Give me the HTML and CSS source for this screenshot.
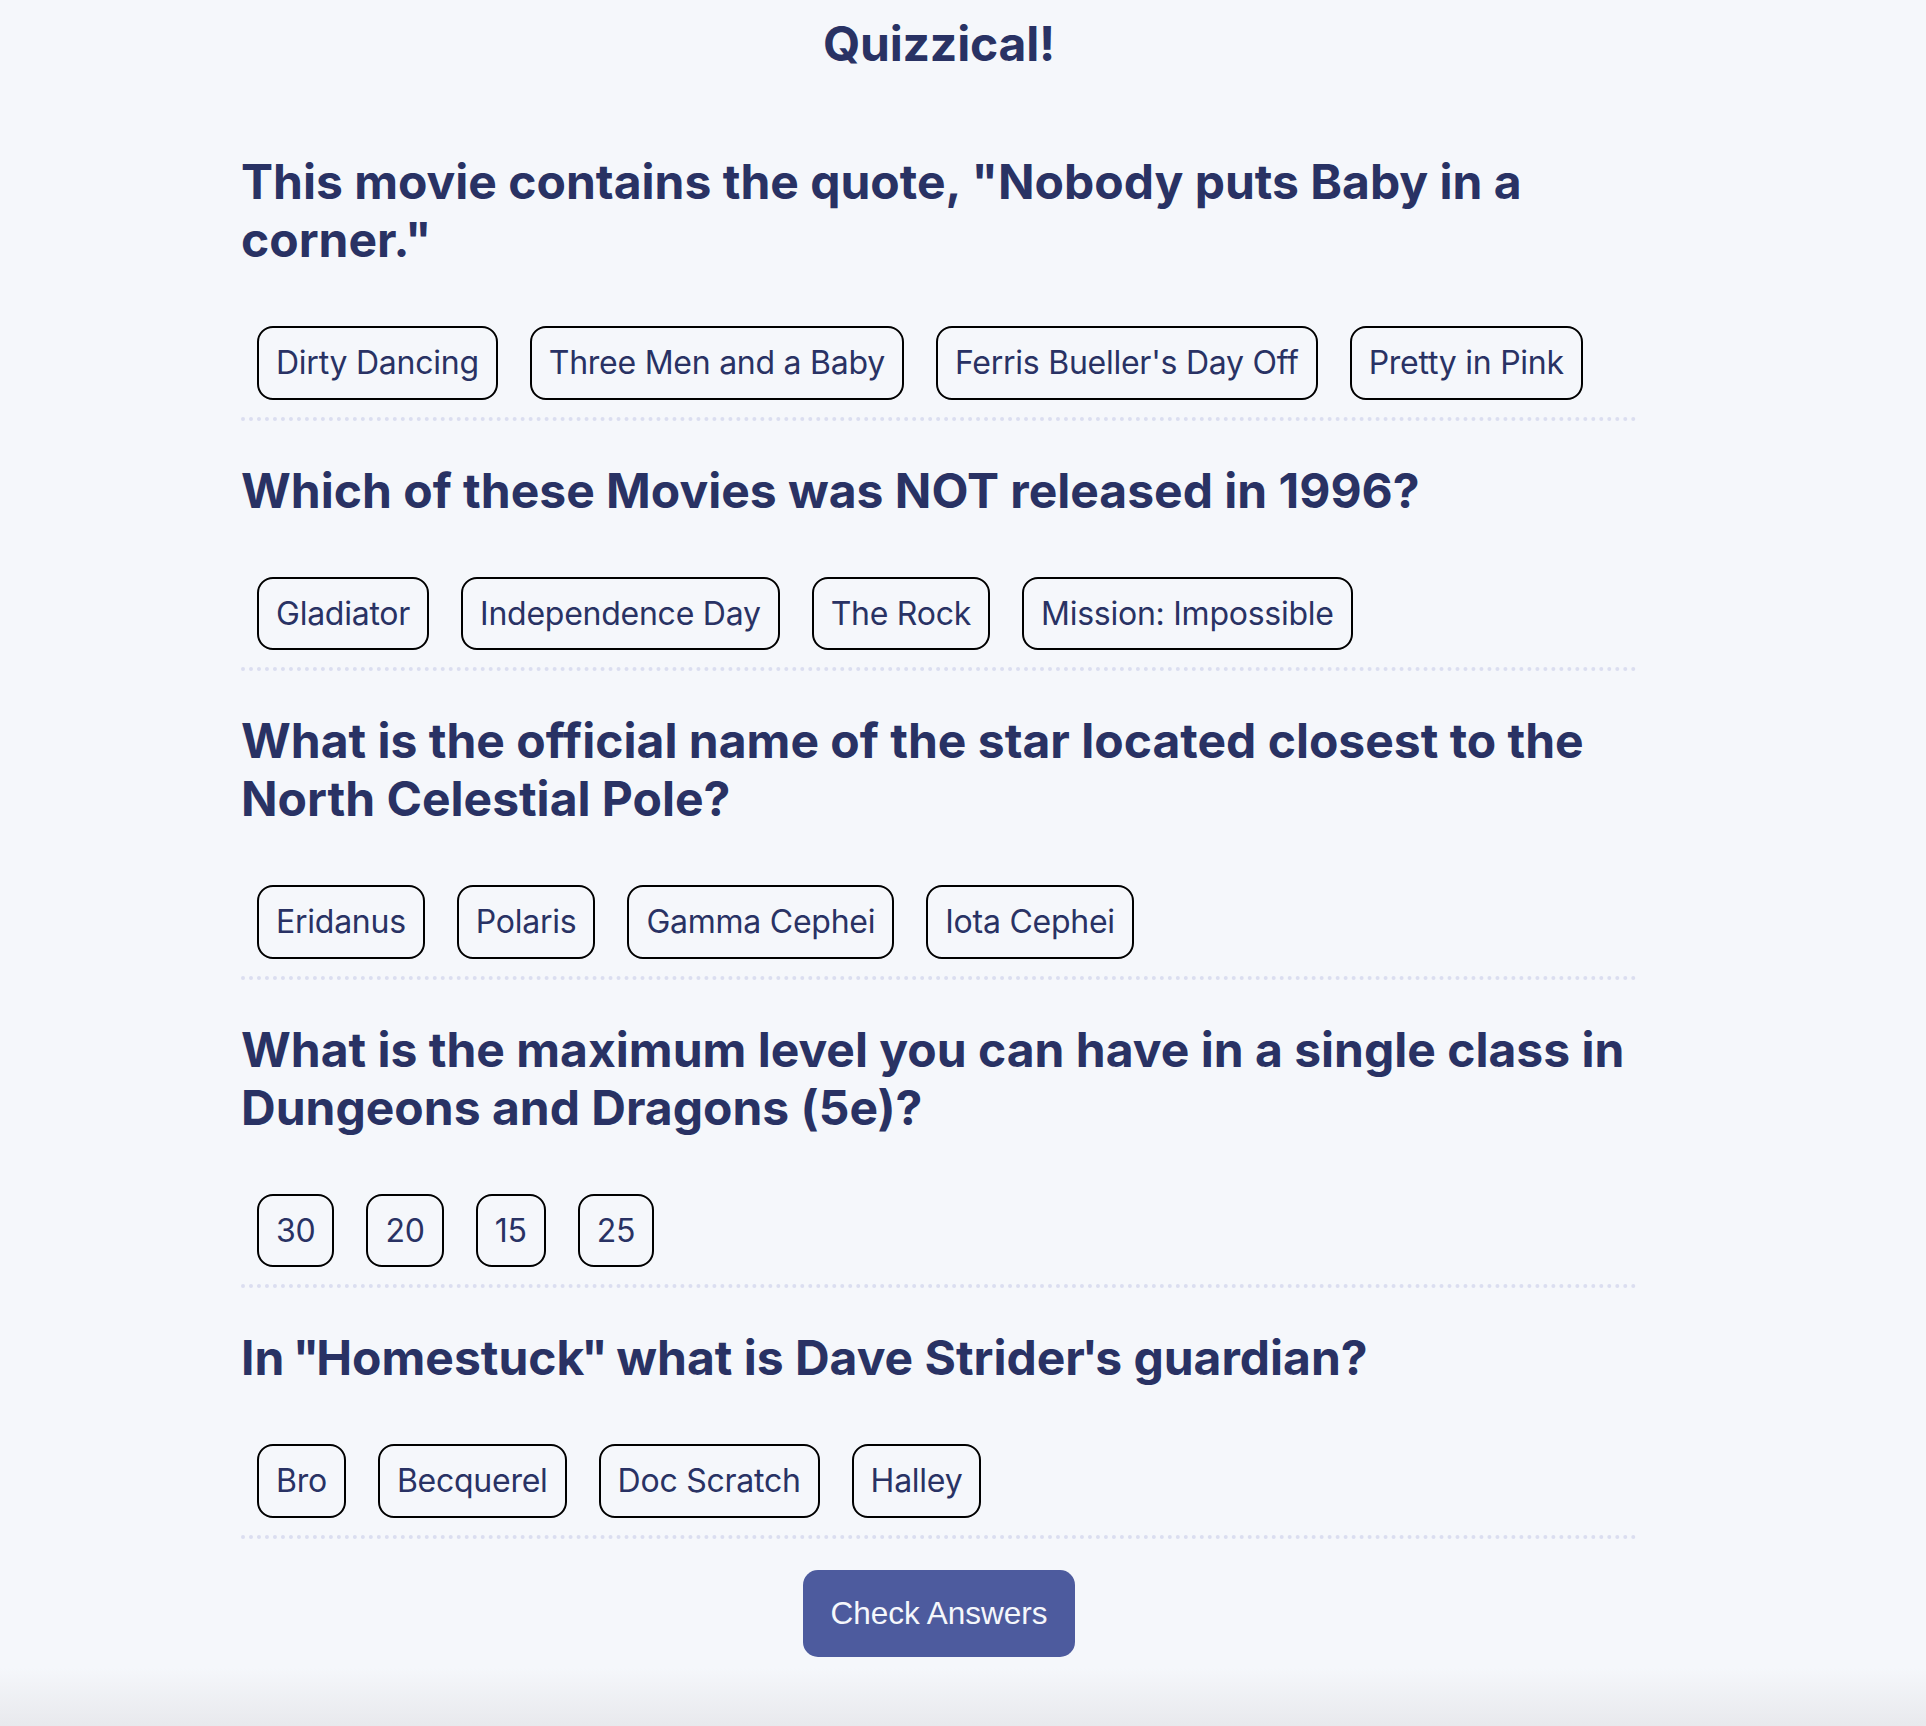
FILE: index.html
```html
<!DOCTYPE html>
<html lang="en">
<head>
<meta charset="utf-8">
<title>Quizzical!</title>
<link rel="stylesheet" href="styles.css">
</head>
<body>
<main class="quiz">
  <h1 class="quiz-title">Quizzical!</h1>

  <section class="question">
    <h2 class="question-text">This movie contains the quote, "Nobody puts Baby in a corner."</h2>
    <ul class="answers">
      <li class="answer">Dirty Dancing</li>
      <li class="answer">Three Men and a Baby</li>
      <li class="answer">Ferris Bueller's Day Off</li>
      <li class="answer">Pretty in Pink</li>
    </ul>
  </section>

  <section class="question">
    <h2 class="question-text">Which of these Movies was NOT released in 1996?</h2>
    <ul class="answers">
      <li class="answer">Gladiator</li>
      <li class="answer">Independence Day</li>
      <li class="answer">The Rock</li>
      <li class="answer">Mission: Impossible</li>
    </ul>
  </section>

  <section class="question">
    <h2 class="question-text">What is the official name of the star located closest to the North Celestial Pole?</h2>
    <ul class="answers">
      <li class="answer">Eridanus</li>
      <li class="answer">Polaris</li>
      <li class="answer">Gamma Cephei</li>
      <li class="answer">Iota Cephei</li>
    </ul>
  </section>

  <section class="question">
    <h2 class="question-text">What is the maximum level you can have in a single class in Dungeons and Dragons (5e)?</h2>
    <ul class="answers">
      <li class="answer">30</li>
      <li class="answer">20</li>
      <li class="answer">15</li>
      <li class="answer">25</li>
    </ul>
  </section>

  <section class="question">
    <h2 class="question-text">In <span class="qm">"</span>Homestuck<span class="qm">"</span> what is Dave Strider<span class="qm">'</span>s guardian?</h2>
    <ul class="answers">
      <li class="answer">Bro</li>
      <li class="answer">Becquerel</li>
      <li class="answer">Doc Scratch</li>
      <li class="answer">Halley</li>
    </ul>
  </section>

  <div class="actions">
    <button class="check-btn" type="button">Check Answers</button>
  </div>
</main>
</body>
</html>
```

FILE: styles.css
```css
html {
  min-height: 100%;
  background: linear-gradient(to bottom, #F5F7FB 0, #F5F7FB 1668px, #E8E9ED 1726px);
  background-repeat: no-repeat;
}

body {
  margin: 0;
  font-family: Inter, "Noto Sans", sans-serif;
  color: #293264;
}

.quiz {
  width: 1396px;
  margin-left: 241px;
  padding-top: 15px;
}

.quiz-title {
  margin: 0 0 39px;
  font-size: 48px;
  line-height: 58px;
  font-weight: 700;
  letter-spacing: -0.2px;
  text-align: center;
}

.question {
  padding: 41px 0 17px;
  border-bottom: 4px dotted #DBDEF0;
}

.question-text {
  margin: 0;
  font-size: 48px;
  line-height: 58px;
  font-weight: 700;
}

.qm {
  margin: 0 -3px;
}

.answers {
  list-style: none;
  margin: 57px 0 0;
  padding: 0;
  display: flex;
  flex-wrap: wrap;
}

.answer {
  margin: 0 16px;
  padding: 15px 17px;
  border: 2px solid #000;
  border-radius: 16px;
  font-size: 32px;
  line-height: 39.5px;
  font-weight: 400;
  letter-spacing: -0.25px;
  color: #293264;
}

.actions {
  display: flex;
  justify-content: center;
  padding-top: 31px;
}

.check-btn {
  border: none;
  border-radius: 15px;
  background: #4D5B9E;
  color: #F5F7FB;
  font-family: "Liberation Sans", Arial, sans-serif;
  font-size: 31.5px;
  line-height: 37px;
  padding: 25px 27px;
}
```
